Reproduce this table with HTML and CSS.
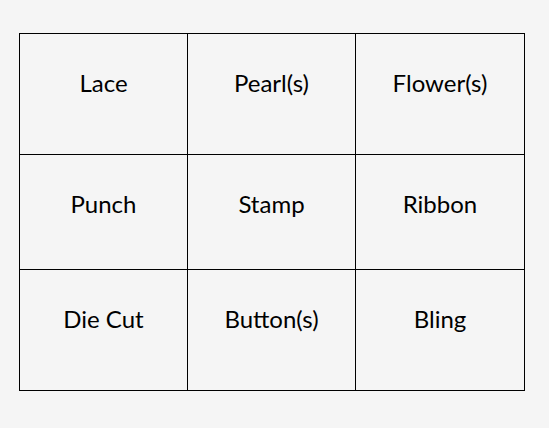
FILE: index.html
```html
<!DOCTYPE html>
<html>
<head>
<meta charset="utf-8">
<link rel="stylesheet" href="styles.css">
</head>
<body>
<div class="board">
  <div class="cell">Lace</div>
  <div class="cell">Pearl(s)</div>
  <div class="cell">Flower(s)</div>
  <div class="cell">Punch</div>
  <div class="cell">Stamp</div>
  <div class="cell">Ribbon</div>
  <div class="cell">Die Cut</div>
  <div class="cell">Button(s)</div>
  <div class="cell">Bling</div>
</div>
</body>
</html>
```
FILE: styles.css
```css
html, body {
  margin: 0;
  padding: 0;
  background: #f5f5f5;
}
body {
  padding: 33px 0 0 19px;
  font-family: Lato, "Open Sans", sans-serif;
}
.board {
  display: grid;
  grid-template-columns: 167px 167px 168px;
  grid-template-rows: 120px 114px 120px;
  gap: 1px;
  padding: 1px;
  background: #000;
  width: 504px;
}
.cell {
  background: #f5f5f5;
  text-align: center;
  padding-top: 35px;
  font-size: 24px;
  line-height: 28px;
  color: #000;
  box-sizing: border-box;
}
```
